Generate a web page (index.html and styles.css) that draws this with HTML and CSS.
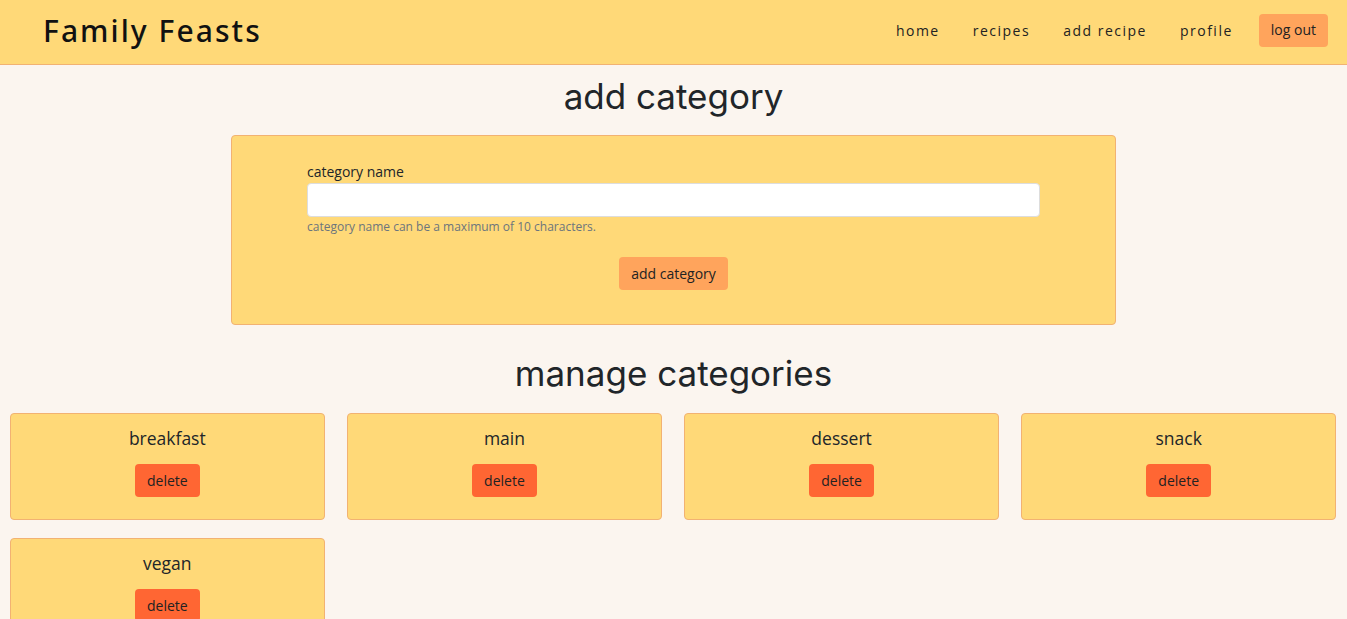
FILE: index.html
```html
<!DOCTYPE html>
<html lang="en">
<head>
<meta charset="utf-8">
<title>Family Feasts - add category</title>
<link rel="stylesheet" href="styles.css">
</head>
<body>
<header class="topbar">
  <a class="brand" href="#">Family Feasts</a>
  <nav class="nav">
    <a class="nav-link" href="#">home</a>
    <a class="nav-link" href="#">recipes</a>
    <a class="nav-link" href="#">add recipe</a>
    <a class="nav-link" href="#">profile</a>
    <a class="nav-btn" href="#">log out</a>
  </nav>
</header>
<main class="page">
  <h1 class="heading">add category</h1>
  <section class="form-card">
    <form class="form">
      <label class="label" for="cat">category name</label>
      <input class="input" id="cat" type="text">
      <p class="help">category name can be a maximum of 10 characters.</p>
      <div class="actions"><button class="btn-add" type="button">add category</button></div>
    </form>
  </section>
  <h1 class="heading heading-2">manage categories</h1>
  <section class="grid">
    <div class="cat-card"><h2 class="cat-name">breakfast</h2><button class="btn-del" type="button">delete</button></div>
    <div class="cat-card"><h2 class="cat-name">main</h2><button class="btn-del" type="button">delete</button></div>
    <div class="cat-card"><h2 class="cat-name">dessert</h2><button class="btn-del" type="button">delete</button></div>
    <div class="cat-card"><h2 class="cat-name">snack</h2><button class="btn-del" type="button">delete</button></div>
    <div class="cat-card"><h2 class="cat-name">vegan</h2><button class="btn-del" type="button">delete</button></div>
  </section>
</main>
</body>
</html>
```

FILE: styles.css
```css
* { box-sizing: border-box; }
body {
  margin: 0;
  background: #fbf5ef;
  color: #212529;
  font-family: "Open Sans", "Noto Sans", sans-serif;
}
.topbar {
  height: 65px;
  background: #ffd978;
  border-bottom: 1px solid #f2b272;
  display: flex;
  align-items: center;
  justify-content: space-between;
  padding: 0 19px 0 43px;
}
.brand {
  font-family: "Noto Sans", sans-serif;
  font-size: 30px;
  font-weight: 500;
  letter-spacing: 2.05px;
  color: #111;
  text-decoration: none;
  margin-top: -4px;
}
.nav { display: flex; align-items: center; }
.nav-link {
  font-size: 14px;
  letter-spacing: 1.5px;
  color: #222;
  text-decoration: none;
  margin-right: 33px;
  margin-top: -3px;
}
.nav-link:nth-child(4) { margin-right: 26px; }
.nav-btn {
  background: #ffa45c;
  color: #222;
  text-decoration: none;
  font-size: 14px;
  padding: 6px 12px 8px;
  border-radius: 4px;
  margin-top: -3px;
}
.page { display: flex; flex-direction: column; align-items: center; }
.heading {
  font-family: Inter, sans-serif;
  font-weight: 400;
  font-size: 35px;
  margin: 11px 0 19px;
  line-height: 40px;
}
.heading-2 { margin: 28px 0 20px; }
.form-card {
  width: 885px;
  background: #ffd978;
  border: 1px solid #f2b272;
  border-radius: 4px;
  padding: 26px 75px 34px;
}
.form { display: flex; flex-direction: column; }
.label { font-size: 14px; margin-bottom: 2px; }
.input {
  height: 34px;
  border: 1px solid #ddd;
  border-radius: 4px;
  background: #fff;
  font: inherit;
}
.help { font-size: 12px; color: #6c757d; margin: 1px 0 0; }
.actions { display: flex; justify-content: center; margin-top: 22px; }
.btn-add {
  background: #ffa45c;
  border: none;
  border-radius: 4px;
  font-family: inherit;
  font-size: 14px;
  color: #222;
  height: 33px;
  padding: 0 12px;
}
.grid {
  width: 100%;
  display: grid;
  grid-template-columns: repeat(4, 1fr);
  column-gap: 22.5px;
  row-gap: 18px;
  padding: 0 11px 0 10px;
}
.cat-card {
  background: #ffd978;
  border: 1px solid #f2b272;
  border-radius: 4px;
  height: 107px;
  display: flex;
  flex-direction: column;
  align-items: center;
  padding-top: 13px;
}
.cat-name { font-size: 17.5px; font-weight: 400; margin: 0 0 14px; line-height: 23px; }
.btn-del {
  background: #ff6633;
  border: none;
  border-radius: 4px;
  font-family: inherit;
  font-size: 14px;
  color: #222;
  height: 33px;
  width: 65px;
}
```
